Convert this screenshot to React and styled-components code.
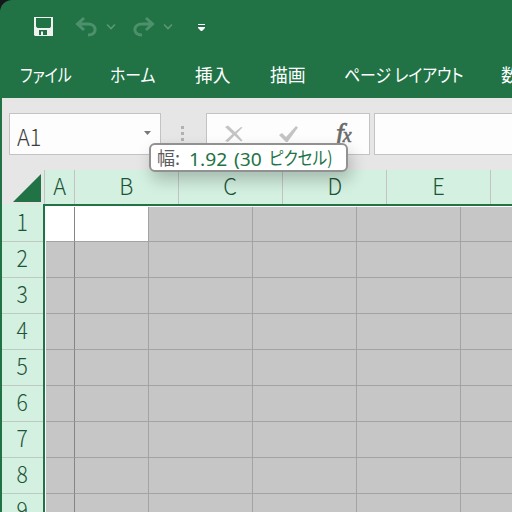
import React from "react";
import styled, { createGlobalStyle } from "styled-components";

const GREEN = "#217346";
const MINT = "#d3f0e0";
const JP = '"Noto Sans CJK JP", sans-serif';
const TIP = '"Noto Sans", "Noto Sans CJK JP", sans-serif';

const GlobalStyle = createGlobalStyle`
  * { box-sizing: border-box; }
  html, body { margin: 0; padding: 0; background: #15181a; overflow: hidden; }
`;

const Window = styled.div`
  position: relative;
  width: 512px;
  height: 512px;
  overflow: hidden;
  background: ${GREEN};
  border-top-left-radius: 12px;
`;

const QuickAccess = styled.div`
  display: flex;
  align-items: center;
  height: 54px;
  padding-left: 33px;
`;

const ToolIcon = styled.svg`
  display: block;
  flex: none;
  width: ${(p) => p.$w}px;
  height: 22px;
  margin-right: ${(p) => p.$gap || 0}px;
  overflow: visible;
`;

const Tabs = styled.nav`
  display: flex;
  height: 44px;
  padding-left: 20px;
  color: #fff;
`;

const Tab = styled.div`
  flex: none;
  width: ${(p) => p.$w}px;
  height: 44px;
`;

const Fit = styled.span`
  display: inline-block;
  white-space: pre;
  transform: scaleX(${(p) => p.$sx || 1});
  transform-origin: left center;
`;

const TabText = styled(Fit)`
  font: 400 18px/41px ${JP};
  font-feature-settings: "palt";
`;

const FormulaBar = styled.div`
  display: flex;
  height: 72px;
  margin-left: 2px;
  padding: 15px 0 0 7px;
  background: #e6e6e6;
`;

const Field = styled.div`
  display: flex;
  flex: none;
  width: ${(p) => p.$w}px;
  height: 42px;
  background: #fdfdfd;
  border: 1px solid #c3c3c3;
`;

const NameBox = styled(Field)`
  justify-content: space-between;
  padding: 0 8px 0 7px;
  color: #3c3c3c;
  font: 300 23.5px/44px ${JP};
`;

const Caret = styled.svg`
  width: 9px;
  height: 5px;
  margin-top: 17px;
`;

const Grip = styled.div`
  display: flex;
  flex: none;
  flex-direction: column;
  gap: 3px;
  width: 45px;
  padding: 13px 0 0 20px;
`;

const Dot = styled.i`
  width: 3px;
  height: 3px;
  background: #b1b1b1;
`;

const FxTools = styled(Field)`
  margin-right: 4px;
  padding: 9px 0 0 18px;
`;

const Fx = styled.div`
  display: flex;
  align-items: baseline;
  height: 30px;
  margin-left: 38px;
  color: #6a6a6a;
  font: italic 400 28px/20px "Liberation Serif", serif;
  -webkit-text-stroke: 0.6px #6a6a6a;
  small { margin-left: -1px; font-size: 20px; }
`;

const Sheet = styled.div`
  display: grid;
  grid-template-columns: 41px 469px;
  grid-template-rows: 34px 308px;
  margin-left: 2px;
  background: #fff;
`;

const Corner = styled.div`
  height: 36px;
  padding: 4px 0 0 11px;
  background: #e6e6e6;
  border-bottom: 1px solid #c3c3c3;
  svg { display: block; }
`;

const ColumnHeads = styled.div`
  display: flex;
  padding-left: 1px;
  background: ${MINT};
`;

const ColumnHead = styled.div`
  flex: none;
  width: ${(p) => p.$w}px;
  height: 34px;
  border-left: ${(p) => (p.$first ? "1px solid #c3c3c3" : "none")};
  border-right: 1px solid #c3c3c3;
  color: #1b5438;
  font: 300 23px/31px ${JP};
  text-align: center;
`;

const HeadText = styled(Fit)`
  transform-origin: center;
`;

const RowHeads = styled.div`
  padding-top: 2px;
  background: ${MINT};
`;

const RowHead = styled.div`
  height: 36px;
  border-bottom: 1px solid #bdc9c2;
  color: #1b5438;
  font: 300 23px/31px ${JP};
  text-align: center;
`;

const Cells = styled.div`
  height: 308px;
  overflow: hidden;
  border-top: 2px solid ${GREEN};
  border-left: 2px solid ${GREEN};
  padding: 1px 0 0 1px;
  background: #fff;
`;

const Row = styled.div`
  display: flex;
  height: ${(p) => (p.$first ? 35 : 36)}px;
`;

const Cell = styled.div`
  flex: none;
  width: ${(p) => p.$w}px;
  background: ${(p) => (p.$active ? "#fff" : "#c6c6c6")};
  border-right: 1px solid ${(p) => (p.$dark ? "#858585" : "#a3a3a3")};
  border-bottom: 1px solid #a3a3a3;
`;

const Tooltip = styled.div`
  position: absolute;
  left: 149px;
  top: 143px;
  width: 199px;
  height: 29px;
  padding-left: 6px;
  background: #fff;
  border: 2px solid #919191;
  border-radius: 6px;
  box-shadow: 3px 8px 16px rgba(0, 0, 0, 0.22);
  color: ${GREEN};
  font: 400 18.5px/27px ${TIP};
  white-space: nowrap;
  display: flex;
`;

const TipPart = styled.div`
  flex: none;
  width: ${(p) => p.$w}px;
  height: 25px;
  color: ${(p) => (p.$muted ? "#5c5c5c" : "inherit")};
  font-feature-settings: "palt";
`;

const TipKana = styled(TipPart)`
  font: 400 18px/25px ${JP};
  font-feature-settings: "palt";
`;

const tabs = [
  ["ファイル", 90, 0.83],
  ["ホーム", 85, 0.88],
  ["挿入", 75, 0.99],
  ["描画", 74, 0.99],
  ["ページ レイアウト", 157, 0.88],
  ["数式", 60, 1],
];
const columns = [["A", 31], ["B", 104], ["C", 104], ["D", 104], ["E", 104], ["", 40]];
const cellWidths = [29, 74, 104, 104, 104, 104];
const rows = [1, 2, 3, 4, 5, 6, 7, 8, 9];

const Chevron = ({ gap }) => (
  <ToolIcon $w={10} $gap={gap} viewBox="0 0 10 22">
    <path d="M1 8.5 5 12.5 9 8.5" fill="none" stroke="#599777" strokeWidth="1.6" />
  </ToolIcon>
);

export default function App() {
  return (
    <Window>
      <GlobalStyle />
      <QuickAccess>
        <ToolIcon $w={22} $gap={20} viewBox="0 0 22 22">
          <path fillRule="evenodd" fill="#f1f1f1" d="M1 1H20V20H2L1 19ZM3 2V10.5L4.5 12H17L18 10.5V2ZM6 14V19H8V15.5H10V19H14V14Z" />
        </ToolIcon>
        <ToolIcon $w={22} $gap={9} viewBox="0 0 22 22">
          <path d="M9 2 2.5 8 9 14M3 8H13C22 8 23 19 13 19" fill="none" stroke="#4d916c" strokeWidth="3" />
        </ToolIcon>
        <Chevron gap={16} />
        <ToolIcon $w={22} $gap={9} viewBox="0 0 22 22">
          <path d="M14 2 20.5 8 14 14M20 8H10C1 8 0 19 10 19" fill="none" stroke="#4d916c" strokeWidth="3" />
        </ToolIcon>
        <Chevron gap={25} />
        <ToolIcon $w={8} viewBox="0 0 8 22">
          <path d="M0 8H7V9H0ZM0 11H7V12L4 15H3L0 12Z" fill="#fff" />
        </ToolIcon>
      </QuickAccess>
      <Tabs>
        {tabs.map(([name, w, sx]) => (
          <Tab key={name} $w={w}><TabText $sx={sx}>{name}</TabText></Tab>
        ))}
      </Tabs>
      <FormulaBar>
        <NameBox $w={152}>
          <Fit $sx={0.92}>A1</Fit>
          <Caret viewBox="0 0 9 5"><path d="M1 0H8L4.5 4Z" fill="#777" /></Caret>
        </NameBox>
        <Grip><Dot /><Dot /><Dot /></Grip>
        <FxTools $w={164}>
          <ToolIcon $w={19} $gap={35} viewBox="0 0 19 22">
            <path d="M0 4 3 2.5 10 9 16 4 17.5 4.5 11.5 10.5 17.5 17.5 16 18.5 9.5 12.5 3 19 0 18 7.5 11Z" fill="#c4c4c4" />
          </ToolIcon>
          <ToolIcon $w={19} viewBox="0 0 19 22">
            <path d="M0 12 3 10 7 14 17 3 19 4.5 8.5 19H7Z" fill="#c4c4c4" />
          </ToolIcon>
          <Fx>f<small>x</small></Fx>
        </FxTools>
        <Field $w={150} />
      </FormulaBar>
      <Sheet>
        <Corner>
          <svg width="28" height="28" viewBox="0 0 28 28"><path d="M28 0V28H0Z" fill={GREEN} /></svg>
        </Corner>
        <ColumnHeads>
          {columns.map(([name, w], i) => (
            <ColumnHead key={i} $w={w} $first={i === 0}><HeadText $sx={0.95}>{name}</HeadText></ColumnHead>
          ))}
        </ColumnHeads>
        <RowHeads>
          {rows.map((n) => <RowHead key={n}><HeadText $sx={0.92}>{n}</HeadText></RowHead>)}
        </RowHeads>
        <Cells>
          {rows.map((n) => (
            <Row key={n} $first={n === 1}>
              {cellWidths.map((w, i) => (
                <Cell key={i} $w={w} $dark={i === 0} $active={n === 1 && i < 2} />
              ))}
            </Row>
          ))}
        </Cells>
      </Sheet>
      <Tooltip>
        <TipKana $w={32} $muted><Fit>幅:</Fit></TipKana>
        <TipPart $w={45}><Fit $sx={1.04}>1.92</Fit></TipPart>
        <TipPart $w={35}><Fit $sx={1.04}>(30</Fit></TipPart>
        <TipKana $w={66}><Fit $sx={0.87}>ピクセル)</Fit></TipKana>
      </Tooltip>
    </Window>
  );
}
